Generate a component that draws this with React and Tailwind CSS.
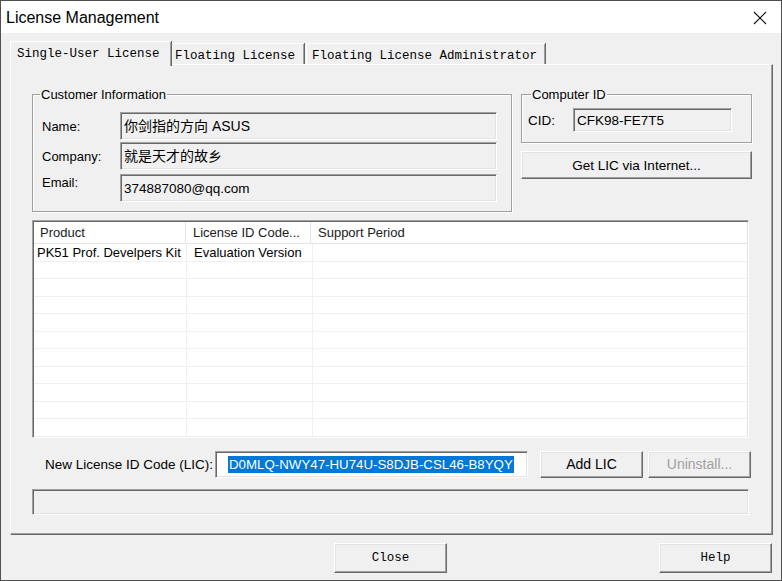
import React from "react";

const sunken =
  "border border-t-[#a0a0a0] border-l-[#a0a0a0] border-r-white border-b-white shadow-[inset_1px_1px_0_#696969,inset_-1px_-1px_0_#e3e3e3]";
const raised =
  "border border-t-white border-l-white border-r-[#696969] border-b-[#696969] shadow-[inset_-1px_-1px_0_#a0a0a0,inset_1px_1px_0_#e3e3e3]";
const group =
  "border border-[#a0a0a0] shadow-[inset_1px_1px_0_#ffffff,1px_1px_0_#ffffff] m-0 p-0 min-w-0";
const cjk = "font-['Liberation_Sans','Noto_Sans_CJK_SC',sans-serif]";

function Field({ children, className = "" }) {
  return (
    <div className={`${sunken} bg-[#f0f0f0] flex items-center pl-[3px] ${className}`}>
      {children}
    </div>
  );
}

const rows = Array.from({ length: 11 });

export default function App() {
  return (
    <div className="w-[782px] h-[581px] bg-[#f0f0f0] border border-[#505050] flex flex-col overflow-hidden text-[13px] text-black font-['Liberation_Sans',sans-serif] leading-[15px]">
      {/* Title bar */}
      <div className="h-[32px] bg-white flex items-center justify-between pl-[5px] pr-[14px] shrink-0">
        <span className="text-[16px] leading-[20px] font-['Liberation_Sans',sans-serif] mt-[1px]">
          License Management
        </span>
        <svg width="14" height="14" viewBox="0 0 14 14" className="mt-[1px]">
          <path d="M1 1L13 13M13 1L1 13" stroke="#111" strokeWidth="1.1" fill="none" />
        </svg>
      </div>

      {/* Tabs */}
      <div className="flex items-end pl-[9px] mt-[8px] h-[23px] font-['Liberation_Mono',monospace] text-[12.5px] text-black relative z-10">
        <div className="h-[25px] -mb-[2px] w-[161px] bg-[#f0f0f0] border-t border-l border-white shadow-[inset_-1px_0_0_#a0a0a0,1px_0_0_#696969] flex items-start pl-[6px] pt-[5px]">
          Single-User License
        </div>
        <div className="h-[21px] w-[132px] ml-[1px] border-t border-white shadow-[inset_-1px_0_0_#a0a0a0,1px_0_0_#696969] flex items-start pl-[3px] pt-[5px]">
          Floating License
        </div>
        <div className="h-[21px] w-[239px] ml-[2px] border-t border-l border-white shadow-[inset_-1px_0_0_#a0a0a0,1px_0_0_#696969] flex items-start pl-[5px] pt-[5px]">
          Floating License Administrator
        </div>
      </div>

      {/* Tab panel */}
      <div className="ml-[9px] w-[763px] h-[471px] border border-t-white border-l-white border-r-[#696969] border-b-[#696969] shadow-[inset_-1px_-1px_0_#a0a0a0] pl-[21px] pt-[22px] flex flex-col">
        {/* Row 1 */}
        <div className="flex gap-[9px]">
          <fieldset className={`${group} w-[480px] h-[125px]`}>
            <legend className="ml-[7px] px-[1px] leading-[15px]">Customer Information</legend>
            <div className="pt-[10px] pl-[9px] flex flex-col">
              <div className="flex items-center h-[28px]">
                <span className="w-[78px]">Name:</span>
                <Field className={`w-[377px] h-[28px] text-[14px] ${cjk}`}>你剑指的方向 ASUS</Field>
              </div>
              <div className="flex items-center h-[28px] mt-[2px]">
                <span className="w-[78px]">Company:</span>
                <Field className={`w-[377px] h-[28px] text-[14px] ${cjk}`}>就是天才的故乡</Field>
              </div>
              <div className="flex items-start h-[28px] mt-[4px]">
                <span className="w-[78px] pt-[1px]">Email:</span>
                <Field className="w-[377px] h-[28px] text-[13.5px]">374887080@qq.com</Field>
              </div>
            </div>
          </fieldset>

          <div className="w-[231px] flex flex-col">
            <fieldset className={`${group} h-[56px]`}>
              <legend className="ml-[9px] px-[1px] leading-[15px]">Computer ID</legend>
              <div className="pt-[6px] pl-[6px] flex items-center">
                <span className="w-[45px] text-[13.5px]">CID:</span>
                <Field className="w-[159px] h-[24px] text-[13.5px]">CFK98-FE7T5</Field>
              </div>
            </fieldset>
            <button className={`${raised} mt-[8px] h-[28px] w-full bg-[#f0f0f0] text-[13.5px] flex items-center justify-center`}>
              Get LIC via Internet...
            </button>
          </div>
        </div>

        {/* List view */}
        <div className={`${sunken} mt-[8px] w-[717px] h-[218px] bg-white flex flex-col p-[1px] overflow-hidden`}>
          <div className="h-[22px] flex border-b border-[#e5e5e5] shrink-0 text-[#1a1a1a]">
            <div className="w-[152px] pl-[6px] flex items-center border-r border-[#e5e5e5]">Product</div>
            <div className="w-[125px] pl-[7px] flex items-center border-r border-[#e5e5e5]">License ID Code...</div>
            <div className="flex-1 pl-[7px] flex items-center">Support Period</div>
          </div>
          {rows.map((_, i) => (
            <div key={i} className="h-[17.5px] flex border-b border-[#f0f0f0] shrink-0">
              <div className="w-[153px] pl-[3px] flex items-center border-r border-[#f0f0f0] whitespace-nowrap overflow-hidden">
                {i === 0 ? "PK51 Prof. Develpers Kit" : ""}
              </div>
              <div className="w-[126px] pl-[7px] flex items-center border-r border-[#f0f0f0] whitespace-nowrap">
                {i === 0 ? "Evaluation Version" : ""}
              </div>
              <div className="flex-1" />
            </div>
          ))}
        </div>

        {/* LIC row */}
        <div className="mt-[13px] flex items-center h-[27px]">
          <span className="ml-[13px] w-[170px] text-[13.5px]">New License ID Code (LIC):</span>
          <div className={`${sunken} bg-white w-[313px] h-[27px] flex items-center pl-[12px]`}>
            <span className="bg-[#0078d7] text-white h-[17px] leading-[17px] px-[1px] text-[13.3px] whitespace-nowrap">
              D0MLQ-NWY47-HU74U-S8DJB-CSL46-B8YQY
            </span>
          </div>
          <button className={`${raised} ml-[12px] w-[103px] h-[27px] bg-[#f0f0f0] text-[14px] flex items-center justify-center`}>
            Add LIC
          </button>
          <button className={`${raised} ml-[5px] w-[103px] h-[27px] bg-[#f0f0f0] text-[14px] text-[#a0a0a0] flex items-center justify-center`}>
            Uninstall...
          </button>
        </div>

        {/* Status bar */}
        <div className={`${sunken} mt-[11px] w-[717px] h-[26px] bg-[#f0f0f0]`} />
      </div>

      {/* Bottom buttons */}
      <div className="flex mt-[8px] font-['Liberation_Mono',monospace] text-[12.5px]">
        <button className={`${raised} ml-[333px] w-[113px] h-[30px] bg-[#f0f0f0] flex items-center justify-center`}>
          Close
        </button>
        <button className={`${raised} ml-[212px] w-[113px] h-[30px] bg-[#f0f0f0] flex items-center justify-center`}>
          Help
        </button>
      </div>
    </div>
  );
}
